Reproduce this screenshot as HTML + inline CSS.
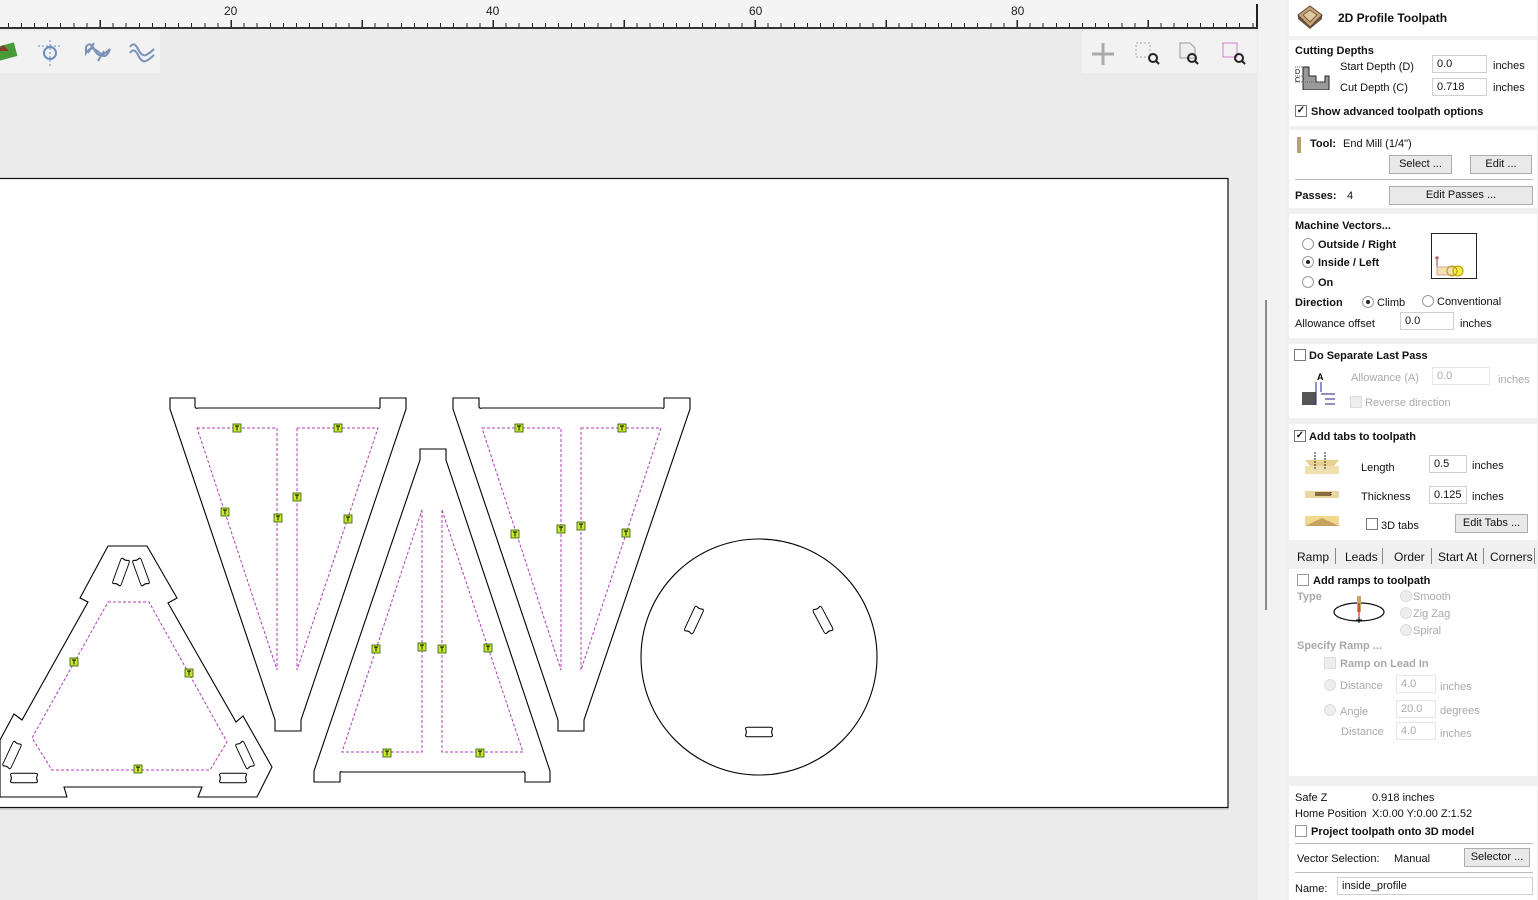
<!DOCTYPE html>
<html><head><meta charset="utf-8">
<style>
*{margin:0;padding:0;box-sizing:border-box}
body{width:1538px;height:900px;overflow:hidden;background:#ebebeb;font-family:"Liberation Sans",Arial,sans-serif;font-size:11px;color:#111;position:relative}
.abs{position:absolute}
#ruler{left:0;top:0;width:1258px;height:29px;background:#f4f4f4;border-bottom:2px solid #333}
.t1{left:0;top:23px;width:1257px;height:4px;background:repeating-linear-gradient(90deg,transparent 0,transparent 7.8px,#222 7.8px,#222 8.8px,transparent 8.8px,transparent 13.1px)}
.t2{left:0;top:20px;width:1257px;height:7px;background:repeating-linear-gradient(90deg,transparent 0,transparent 99.5px,#222 99.5px,#222 101px,transparent 101px,transparent 131px)}
.rn{top:4px;font-size:12px;color:#222}
.sec{position:absolute;left:1289px;width:248px;background:#fff}
.b{font-weight:bold}
.inp{position:absolute;height:18px;border:1px solid #d0d0d0;background:#fff;padding:2px 4px;font-size:11px}
.btn{position:absolute;height:19px;border:1px solid #adadad;background:#e9e9e9;text-align:center;line-height:17px;font-size:11px}
.cb{position:absolute;width:12px;height:12px;border:1px solid #777;background:#fff;font-size:10px;line-height:10px;text-align:center;font-weight:bold}
.rd{position:absolute;width:12px;height:12px;border:1px solid #999;border-radius:50%;background:#fff}
.rd.on::after{content:"";position:absolute;left:3px;top:3px;width:4px;height:4px;border-radius:50%;background:#222}
.g{color:#aaa}
.s{position:absolute;white-space:nowrap;margin-top:1px}
</style></head><body>
<div id="ruler" class="abs"><div class="abs t1"></div><div class="abs t2"></div>
<div class="abs rn" style="left:224px">20</div><div class="abs rn" style="left:486px">40</div><div class="abs rn" style="left:749px">60</div><div class="abs rn" style="left:1011px">80</div>
<div class="abs" style="left:1256px;top:4px;width:2px;height:23px;background:#222"></div></div>
<div class="abs" style="left:1258px;top:0;width:28px;height:900px;background:#f2f2f2"></div>
<div class="abs" style="left:1265px;top:300px;width:2px;height:310px;background:#8a8a8a"></div>
<div class="abs" style="left:0;top:31px;width:160px;height:42px;background:#f2f2f2"></div>
<div class="abs" style="left:1082px;top:31px;width:175px;height:42px;background:#f2f2f2"></div>
<svg class="abs" style="left:0;top:31px" width="1258" height="42">
<rect x="-6" y="14" width="22" height="14" fill="#4a9a3a" transform="rotate(-15 5 21)"/><path d="M-3 20 l6-6 6 6z" fill="#8a3a2a"/>
<circle cx="50" cy="22" r="6" fill="none" stroke="#6b8fc0" stroke-width="2"/><path d="M50 9v26M38 15h24" stroke="#6b8fc0" stroke-dasharray="2 2"/>
<path d="M86 16q4-6 8 2t8 6 8-6q-4 10-8 6t-8-6-8 4z M88 22l6-10 M98 30l6-10" fill="none" stroke="#7c90b8" stroke-width="2"/>
<path d="M130 16q4-6 8 2t8 6 8-6M130 22q4-6 8 2t8 6 8-6" fill="none" stroke="#7c90b8" stroke-width="2"/>
<path d="M1103 12v22M1092 23h22" stroke="#aaa" stroke-width="3"/>
<rect x="1136" y="12" width="14" height="14" fill="none" stroke="#aaa" stroke-dasharray="2 2"/><circle cx="1153" cy="27" r="4" fill="none" stroke="#222" stroke-width="2"/><path d="M1156 30l3 3" stroke="#222" stroke-width="2"/>
<path d="M1180 12h10l5 5v10h-15z" fill="#eee" stroke="#999"/><circle cx="1192" cy="27" r="4" fill="none" stroke="#222" stroke-width="2"/><path d="M1195 30l3 3" stroke="#222" stroke-width="2"/>
<rect x="1223" y="12" width="14" height="14" fill="none" stroke="#d080d0"/><circle cx="1239" cy="27" r="4" fill="none" stroke="#222" stroke-width="2"/><path d="M1242 30l3 3" stroke="#222" stroke-width="2"/>
</svg>
<svg class="abs" style="left:0;top:0" width="1258" height="900">
<defs><g id="tab"><rect x="-4" y="-4" width="8" height="8" fill="#c8e830" stroke="#2a5a00" stroke-width="0.8"/><path d="M-2 -2h4M0 -2v4.5" stroke="#000" stroke-width="0.9"/></g>
<path id="bone" d="M-10 -5 q-3 0 -2 2.5 q1 2.5 0 5 q-1 2.5 2 2.5 h20 q3 0 2-2.5 q-1-2.5 0-5 q1-2.5-2-2.5z" fill="#fff" stroke="#000" stroke-width="1"/></defs>
<rect x="-2" y="178.5" width="1230" height="629" fill="#fff" stroke="#111" stroke-width="1.2"/>
<line x1="0" y1="809" x2="1229" y2="809" stroke="#bbb"/>
<g fill="none" stroke="#000" stroke-width="1.1">
<path d="M170 398H195V407Q196 409 198 408H378Q380 409 380 407V398H406V409L301 720V731H275V720L170 409Z"/>
<path d="M453 398H479V407Q480 409 482 408H662Q664 409 664 407V398H690V409L584 720V731H558V720L453 409Z"/>
<path d="M420 449H446V460L550 771V782H525V773Q524 771 522 772H342Q340 771 340 773V782H314V771L420 460Z"/>
<path d="M108 546H147L177 598L168 603L236 722L243 716L272 767L257 797H198L202 787H64L67 797H0V740L14 714L22 720L88 602L80 598Z"/>
<circle cx="759" cy="657" r="118"/>
</g>
<use href="#bone" transform="translate(121 572) rotate(-70) scale(1.1 0.9)"/>
<use href="#bone" transform="translate(141 572) rotate(70) scale(1.1 0.9)"/>
<use href="#bone" transform="translate(12 755) rotate(-65) scale(1.1 0.9)"/>
<use href="#bone" transform="translate(24 778) scale(1.1 0.95)"/>
<use href="#bone" transform="translate(245 755) rotate(65) scale(1.1 0.9)"/>
<use href="#bone" transform="translate(233 778) scale(1.1 0.95)"/>
<use href="#bone" transform="translate(694 620) rotate(-65) scale(1.1 0.95)"/>
<use href="#bone" transform="translate(823 620) rotate(62) scale(1.1 0.95)"/>
<use href="#bone" transform="translate(759 732) scale(1.1 0.95)"/>
<g fill="none" stroke="#b03cb8" stroke-width="1" stroke-dasharray="3 2">
<path d="M197 428H277V670Z M297 428H378L297 670Z"/>
<path d="M482 428H561V670Z M581 428H661L581 670Z"/>
<path d="M422 510V752H342Z M442 510V752H523Z"/>
<path d="M108 602H149L227 742L210 770H52L32 738Z"/>
</g>
<use href="#tab" x="237" y="428"/><use href="#tab" x="338" y="428"/><use href="#tab" x="225" y="512"/><use href="#tab" x="297" y="497"/><use href="#tab" x="278" y="518"/><use href="#tab" x="348" y="519"/>
<use href="#tab" x="376" y="649"/><use href="#tab" x="422" y="647"/><use href="#tab" x="442" y="649"/><use href="#tab" x="488" y="648"/><use href="#tab" x="387" y="753"/><use href="#tab" x="480" y="753"/>
<use href="#tab" x="519" y="428"/><use href="#tab" x="622" y="428"/><use href="#tab" x="515" y="534"/><use href="#tab" x="561" y="529"/><use href="#tab" x="581" y="526"/><use href="#tab" x="626" y="533"/>
<use href="#tab" x="74" y="662"/><use href="#tab" x="189" y="673"/><use href="#tab" x="138" y="769"/>
</svg>

<div class="abs" style="left:1286px;top:0;width:252px;height:900px;background:#f0f0f0"></div>
<div class="sec" style="top:0;height:36px">
<svg class="abs" style="left:5px;top:3px" width="30" height="28"><path d="M4 12L16 3L28 12L16 24Z" fill="#c9a77a" stroke="#5a4030"/><path d="M4 12v4l12 10v-2zM28 12v4L16 26v-2z" fill="#6a5040"/><path d="M9 12L16 7L23 12L16 19Z" fill="#e0c8a0" stroke="#7a5a40"/></svg>
<div class="s b" style="left:49px;top:10px;font-size:12px">2D Profile Toolpath</div></div>
<div class="sec" style="top:40px;height:86px">
<div class="s b" style="left:6px;top:4px">Cutting Depths</div>
<svg class="abs" style="left:6px;top:24px" width="40" height="26"><path d="M8 3h6v9h7v6h9v-6h4v14H8z" fill="#999" stroke="#222"/><path d="M0 3h8M0 12h8M0 18h30" stroke="#666" stroke-dasharray="1 1"/><text x="0" y="10" font-size="7">D</text><text x="0" y="18" font-size="7">C</text></svg>
<div class="s" style="left:51px;top:20px">Start Depth (D)</div><div class="inp" style="left:143px;top:15px;width:55px">0.0</div><div class="s" style="left:204px;top:19px">inches</div>
<div class="s" style="left:51px;top:41px">Cut Depth (C)</div><div class="inp" style="left:143px;top:38px;width:55px">0.718</div><div class="s" style="left:204px;top:41px">inches</div>
<div class="cb" style="left:6px;top:65px">✓</div><div class="s b" style="left:22px;top:65px">Show advanced toolpath options</div></div>
<div class="sec" style="top:130px;height:78px">
<div class="abs" style="left:8px;top:7px;width:4px;height:16px;background:#b8a070"></div>
<div class="s b" style="left:21px;top:7px">Tool:</div><div class="s" style="left:54px;top:7px">End Mill (1/4")</div>
<div class="btn" style="left:100px;top:25px;width:63px">Select ...</div><div class="btn" style="left:181px;top:25px;width:62px">Edit ...</div>
<div class="abs" style="left:6px;top:49px;width:238px;height:1px;background:#bbb"></div>
<div class="s b" style="left:6px;top:59px">Passes:</div><div class="s" style="left:58px;top:59px">4</div>
<div class="btn" style="left:100px;top:56px;width:144px">Edit Passes ...</div></div>
<div class="sec" style="top:214px;height:124px">
<div class="s b" style="left:6px;top:5px">Machine Vectors...</div>
<div class="rd" style="left:13px;top:24px"></div><div class="s b" style="left:29px;top:24px">Outside / Right</div>
<div class="rd on" style="left:13px;top:42px"></div><div class="s b" style="left:29px;top:42px">Inside / Left</div>
<div class="rd" style="left:13px;top:62px"></div><div class="s b" style="left:29px;top:62px">On</div>
<div class="abs" style="left:142px;top:19px;width:46px;height:46px;border:1px solid #222;background:#fff"><svg width="44" height="44"><path d="M5 22v18M3 24h4" stroke="#933"/><rect x="5" y="33" width="20" height="8" fill="#f4e0b0" stroke="#caa"/><circle cx="26" cy="37" r="5" fill="#ee4" stroke="#b90"/><circle cx="20" cy="37" r="5" fill="none" stroke="#b90"/></svg></div>
<div class="s b" style="left:6px;top:82px">Direction</div>
<div class="rd on" style="left:73px;top:82px"></div><div class="s" style="left:88px;top:82px">Climb</div>
<div class="rd" style="left:133px;top:81px"></div><div class="s" style="left:148px;top:81px">Conventional</div>
<div class="s" style="left:6px;top:103px">Allowance offset</div><div class="inp" style="left:111px;top:98px;width:54px">0.0</div><div class="s" style="left:171px;top:103px">inches</div></div>
<div class="sec" style="top:344px;height:74px">
<div class="cb" style="left:5px;top:5px"></div><div class="s b" style="left:20px;top:5px">Do Separate Last Pass</div>
<svg class="abs" style="left:10px;top:28px" width="36" height="36"><text x="18" y="8" font-size="9" font-weight="bold">A</text><rect x="3" y="20" width="14" height="13" fill="#555"/><path d="M17 10v23M22 10v10M22 22h16M26 27h12M26 32h12" stroke="#228" fill="none"/></svg>
<div class="s g" style="left:62px;top:27px">Allowance (A)</div><div class="inp g" style="left:143px;top:23px;width:58px;border-color:#e6e6e6">0.0</div><div class="s g" style="left:209px;top:29px">inches</div>
<div class="cb" style="left:61px;top:52px;border-color:#ddd;background:#eee"></div><div class="s g" style="left:76px;top:52px">Reverse direction</div></div>
<div class="sec" style="top:424px;height:116px">
<div class="cb" style="left:5px;top:6px">✓</div><div class="s b" style="left:20px;top:6px">Add tabs to toolpath</div>
<svg class="abs" style="left:14px;top:26px" width="44" height="85"><path d="M2 10h34l-5 6h-24z" fill="#e8d090"/><rect x="2" y="16" width="34" height="8" fill="#f0e0b0"/><path d="M12 2v18M22 2v18" stroke="#222" stroke-dasharray="2 1"/><rect x="2" y="41" width="34" height="7" fill="#e8d8a0"/><rect x="12" y="42" width="16" height="4" fill="#8a6a40"/><path d="M28 42v4" stroke="#222" stroke-dasharray="1 1"/><path d="M2 66h34v10h-34z" fill="#f0d890"/><path d="M2 76l17-8 17 8" fill="#c8a060"/></svg>
<div class="s" style="left:72px;top:37px">Length</div><div class="inp" style="left:140px;top:31px;width:38px">0.5</div><div class="s" style="left:183px;top:35px">inches</div>
<div class="s" style="left:72px;top:66px">Thickness</div><div class="inp" style="left:140px;top:62px;width:38px">0.125</div><div class="s" style="left:183px;top:66px">inches</div>
<div class="cb" style="left:77px;top:94px"></div><div class="s" style="left:92px;top:95px">3D tabs</div>
<div class="btn" style="left:166px;top:90px;width:73px">Edit Tabs ...</div></div>
<div class="abs" style="left:1289px;top:545px;width:249px;height:22px;font-size:12px">
<div class="s" style="left:8px;top:4px">Ramp</div><div class="abs" style="left:46px;top:3px;width:1px;height:16px;background:#888"></div>
<div class="s" style="left:56px;top:4px">Leads</div><div class="abs" style="left:93px;top:3px;width:1px;height:16px;background:#888"></div>
<div class="s" style="left:105px;top:4px">Order</div><div class="abs" style="left:142px;top:3px;width:1px;height:16px;background:#888"></div>
<div class="s" style="left:149px;top:4px">Start At</div><div class="abs" style="left:194px;top:3px;width:1px;height:16px;background:#888"></div>
<div class="s" style="left:201px;top:4px">Corners</div><div class="abs" style="left:245px;top:3px;width:1px;height:16px;background:#888"></div></div>
<div class="sec" style="top:569px;height:207px">
<div class="cb" style="left:8px;top:5px;border-color:#999"></div><div class="s b" style="left:24px;top:5px">Add ramps to toolpath</div>
<div class="s b g" style="left:8px;top:21px">Type</div>
<svg class="abs" style="left:42px;top:22px" width="56" height="40"><ellipse cx="28" cy="21" rx="25" ry="9" fill="#fff" stroke="#111" stroke-width="1.2"/><rect x="26" y="5" width="4" height="16" fill="#c8a860"/><path d="M28 12v20" stroke="#c00"/><path d="M25 29h6M28 26v6" stroke="#000"/></svg>
<div class="rd" style="left:111px;top:21px;border-color:#ddd;background:#eee"></div><div class="s g" style="left:124px;top:21px">Smooth</div>
<div class="rd" style="left:111px;top:38px;border-color:#ddd;background:#eee"></div><div class="s g" style="left:124px;top:38px">Zig Zag</div>
<div class="rd" style="left:111px;top:55px;border-color:#ddd;background:#eee"></div><div class="s g" style="left:124px;top:55px">Spiral</div>
<div class="s b g" style="left:8px;top:70px">Specify Ramp ...</div>
<div class="cb" style="left:35px;top:88px;border-color:#ddd;background:#eee"></div><div class="s b g" style="left:51px;top:88px">Ramp on Lead In</div>
<div class="rd" style="left:35px;top:110px;border-color:#ddd;background:#eee"></div><div class="s g" style="left:51px;top:110px">Distance</div><div class="inp g" style="left:107px;top:106px;width:40px;border-color:#e6e6e6">4.0</div><div class="s g" style="left:151px;top:111px">inches</div>
<div class="rd" style="left:35px;top:135px;border-color:#ddd;background:#eee"></div><div class="s g" style="left:51px;top:136px">Angle</div><div class="inp g" style="left:107px;top:131px;width:40px;border-color:#e6e6e6">20.0</div><div class="s g" style="left:151px;top:135px">degrees</div>
<div class="s g" style="left:52px;top:156px">Distance</div><div class="inp g" style="left:107px;top:153px;width:40px;border-color:#e6e6e6">4.0</div><div class="s g" style="left:151px;top:158px">inches</div></div>
<div class="sec" style="top:786px;height:114px">
<div class="s" style="left:6px;top:5px">Safe Z</div><div class="s" style="left:83px;top:5px">0.918 inches</div>
<div class="s" style="left:6px;top:21px">Home Position</div><div class="s" style="left:83px;top:21px">X:0.00 Y:0.00 Z:1.52</div>
<div class="cb" style="left:6px;top:39px;border-color:#999"></div><div class="s b" style="left:22px;top:39px">Project toolpath onto 3D model</div>
<div class="abs" style="left:6px;top:57px;width:238px;height:1px;background:#bbb"></div>
<div class="s" style="left:8px;top:66px">Vector Selection:</div><div class="s" style="left:105px;top:66px">Manual</div>
<div class="btn" style="left:175px;top:62px;width:66px">Selector ...</div>
<div class="abs" style="left:6px;top:86px;width:238px;height:1px;background:#bbb"></div>
<div class="s" style="left:6px;top:96px">Name:</div><div class="inp" style="left:48px;top:91px;width:196px">inside_profile</div></div>
</body></html>
